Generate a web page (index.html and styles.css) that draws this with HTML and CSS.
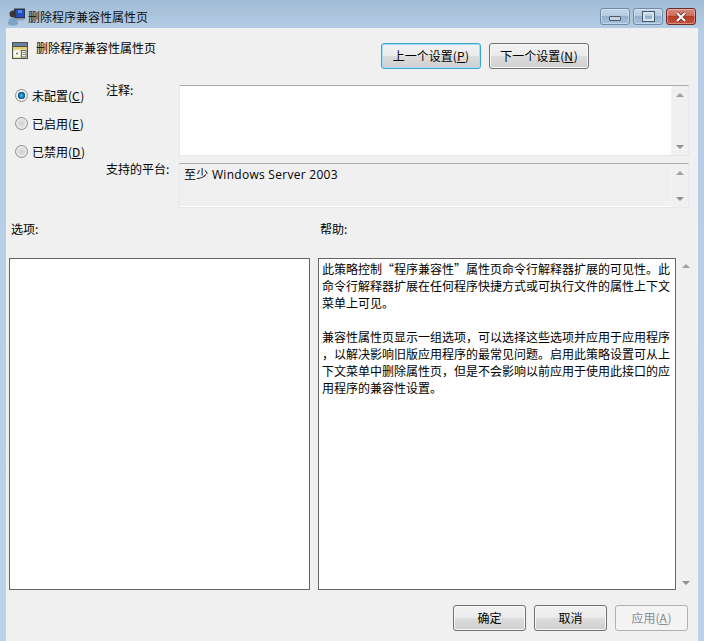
FILE: index.html
```html
<!DOCTYPE html>
<html lang="zh-CN">
<head>
<meta charset="utf-8">
<title>删除程序兼容性属性页</title>
<link rel="stylesheet" href="styles.css">
</head>
<body>
<div class="window">
  <header class="titlebar">
    <svg class="app-icon" width="17" height="18" viewBox="0 0 17 18">
      <rect x="6" y="0.500" width="11" height="10" fill="#2b3444"/>
      <rect x="8" y="2" width="8" height="7" fill="#1f4fc8"/>
      <rect x="10" y="2" width="4" height="3" fill="#4f86e6"/>
      <rect x="8" y="10.500" width="8" height="2" fill="#9aa3ad"/>
      <circle cx="5" cy="6" r="3.500" fill="#3b3633"/>
      <path d="M0 16c0-4 2-6.500 5-6.500s5 2.500 5 6.500c-2 2-8 2-10 0z" fill="#7fa3c6"/>
    </svg>
    <span class="window-title">删除程序兼容性属性页</span>
    <div class="controls">
      <span class="ctl"><i class="glyph-min"></i></span>
      <span class="ctl"><i class="glyph-max"></i></span>
      <span class="ctl close">
        <svg width="14" height="10" viewBox="0 0 14 10"><path d="M3 1 11 9M11 1 3 9" stroke="#5a2020" stroke-width="3.600" fill="none"/><path d="M3 1 11 9M11 1 3 9" stroke="#f4f4f4" stroke-width="2.400" fill="none"/></svg>
      </span>
    </div>
  </header>
  <main class="client">
    <div class="head">
      <svg class="policy-icon" width="16" height="17" viewBox="0 0 16 17">
        <rect x="0" y="0" width="16" height="17" fill="#465552"/>
        <rect x="1" y="1" width="14" height="3" fill="#6f7fa0"/>
        <rect x="1" y="5" width="14" height="2" fill="#e7c96a"/>
        <rect x="1" y="7" width="14" height="9" fill="#e4dca4"/>
        <circle cx="5" cy="11.500" r="3.500" fill="#f8f8f2"/>
        <circle cx="5" cy="11.500" r="1" fill="#67705f"/>
        <rect x="9.500" y="8.500" width="4.500" height="6.500" fill="#fff" stroke="#5d6b68"/>
        <path d="M10.500 10.500h2.500M10.500 12.500h2.500" stroke="#6d7c7a"/>
      </svg>
      <span class="policy-title">删除程序兼容性属性页</span>
      <div class="nav">
        <button class="btn focused" type="button">上一个设置(<u>P</u>)</button>
        <button class="btn" type="button">下一个设置(<u>N</u>)</button>
      </div>
    </div>
    <div class="config">
      <div class="radios">
        <label class="radio-row"><span class="radio on"></span><span>未配置(<u>C</u>)</span></label>
        <label class="radio-row"><span class="radio"></span><span>已启用(<u>E</u>)</span></label>
        <label class="radio-row"><span class="radio"></span><span>已禁用(<u>D</u>)</span></label>
      </div>
      <div class="field-label note-label">注释:</div>
      <div class="box note">
        <div class="box-body"></div>
        <div class="scroll"><i class="up"></i><i class="down"></i></div>
      </div>
      <div class="field-label platform-label">支持的平台:</div>
      <div class="box platform">
        <div class="box-body platform-text">至少 Windows Server 2003</div>
        <div class="scroll"><i class="up"></i><i class="down"></i></div>
      </div>
    </div>
    <div class="section-labels">
      <span class="options-label">选项:</span>
      <span>帮助:</span>
    </div>
    <div class="panes">
      <div class="pane options"></div>
      <div class="pane help">此策略控制“程序兼容性”属性页命令行解释器扩展的可见性。此<br>命令行解释器扩展在任何程序快捷方式或可执行文件的属性上下文<br>菜单上可见。<br><br>兼容性属性页显示一组选项，可以选择这些选项并应用于应用程序<br>，以解决影响旧版应用程序的最常见问题。启用此策略设置可从上<br>下文菜单中删除属性页，但是不会影响以前应用于使用此接口的应<br>用程序的兼容性设置。</div>
      <div class="scroll help-scroll"><i class="up"></i><i class="down"></i></div>
    </div>
    <footer class="footer">
      <button class="btn" type="button">确定</button>
      <button class="btn" type="button">取消</button>
      <button class="btn disabled" type="button">应用(<u>A</u>)</button>
    </footer>
  </main>
</div>
</body>
</html>
```
FILE: styles.css
```css
* { box-sizing: border-box; }
html, body { margin: 0; padding: 0; }
body {
  width: 704px;
  height: 641px;
  overflow: hidden;
  font-family: "Noto Sans CJK SC", "Open Sans", sans-serif;
  font-size: 12px;
  line-height: 17px;
  color: #000;
}
u { letter-spacing: 0.6px; }
.window {
  width: 704px;
  height: 641px;
  display: flex;
  flex-direction: column;
  background: linear-gradient(180deg, #a2bcd5 0, #b5cde5 30px, #bbd2e9 100%);
}
.titlebar {
  height: 28px;
  flex: none;
  display: flex;
  align-items: flex-start;
  padding-left: 8px;
}
.app-icon { margin-top: 8px; flex: none; }
.window-title { margin: 8px 0 0 3px; line-height: 17px; color: #0a1018; }
.controls { margin-left: auto; margin-right: 8px; margin-top: 8px; display: flex; gap: 3px; }
.ctl {
  width: 30px;
  height: 17px;
  border: 1px solid #6f8aa5;
  border-radius: 3px;
  background: linear-gradient(180deg, #c4d6e8 0, #b4cbe0 45%, #94b2d0 50%, #a6c2dc 100%);
  box-shadow: inset 0 0 0 1px rgba(255,255,255,.35);
  display: flex;
  align-items: center;
  justify-content: center;
}
.ctl.close {
  border-color: #6b2a2a;
  background: linear-gradient(180deg, #d68a7c 0, #cc6b5a 45%, #b83a26 50%, #c4553f 100%);
}
.glyph-min { display: block; width: 12px; height: 5px; margin-top: 3px; background: #c9d2dc; border: 1px solid #4a5a6c; border-radius: 1px; }
.glyph-max { display: block; width: 11px; height: 9px; background: transparent; border: 2px solid #d8e2ec; outline: 1px solid #46586c; outline-offset: 0; }
.client {
  flex: 1;
  margin: 0 6px;
  background: #f0f0f0;
  display: flex;
  flex-direction: column;
  min-height: 0;
}
.head {
  height: 57px;
  flex: none;
  display: flex;
  align-items: flex-start;
  padding: 14px 109px 0 6px;
}
.policy-icon { flex: none; }
.policy-title { margin-left: 8px; margin-top: -3px; line-height: 17px; }
.nav { margin-left: auto; margin-top: 1px; display: flex; gap: 8px; }
.btn {
  width: 73px;
  height: 26px;
  padding: 0 0 2px;
  border: 1px solid #707070;
  border-radius: 3px;
  background: linear-gradient(180deg, #f2f2f2 0, #ebebeb 50%, #dddddd 50%, #cfcfcf 100%);
  box-shadow: inset 0 0 0 1px #f8f8f8;
  font: inherit;
  color: #000;
}
.nav .btn { width: 100px; }
.btn.focused {
  border-color: #3aa6d8;
  box-shadow: inset 0 0 0 1px #a6e0f5;
}
.btn.disabled {
  border-color: #adb2b5;
  background: #f4f4f4;
  box-shadow: none;
  color: #8a8a8a;
}
.config {
  flex: none;
  display: grid;
  grid-template-columns: 100px 73px 510px;
  grid-template-rows: 71px 45px;
  row-gap: 7px;
}
.radios {
  grid-row: 1 / span 2;
  padding: 2px 0 0 9px;
  display: flex;
  flex-direction: column;
  gap: 11px;
}
.radio-row { display: flex; align-items: center; gap: 4px; height: 17px; }
.radio {
  width: 13px;
  height: 13px;
  flex: none;
  border-radius: 50%;
  border: 1px solid #8e8f8f;
  background: radial-gradient(circle at 50% 50%, #d0d0d0 0, #f4f4f4 100%);
  box-shadow: inset 0 0 0 1px #e8e8e8;
}
.radio.on { background: radial-gradient(circle at 50% 50%, #4fc2f0 0, #0f6fa0 2.500px, #1d5f85 3.500px, #f2f2f2 4px); }
.field-label { grid-column: 2; line-height: 17px; }
.note-label { grid-row: 1; margin-top: -4px; }
.platform-label { grid-row: 2; margin-top: -3px; }
.box {
  grid-column: 3;
  display: flex;
  border: 1px solid #e3e7ee;
  border-top-color: #ababab;
}
.note { background: #fff; grid-row: 1; }
.platform { background: #f0f0f0; grid-row: 2; box-shadow: inset -1px -1px 0 #fff; }
.box-body { flex: 1; }
.platform-text {
  padding: 2px 0 0 4px;
  font-family: "Open Sans", "Noto Sans CJK SC", sans-serif;
  font-size: 12px;
  letter-spacing: 0.28px;
}
.scroll {
  width: 17px;
  flex: none;
  background: #f0f0f0;
  display: flex;
  flex-direction: column;
  justify-content: space-between;
  align-items: center;
  padding: 7px 0 6px;
  border-left: 1px solid #f5f5f5;
}
.up, .down { display: block; width: 0; height: 0; border-left: 4px solid transparent; border-right: 4px solid transparent; }
.up { border-bottom: 4px solid #a0a0a0; }
.down { border-top: 4px solid #909090; }
.section-labels {
  flex: none;
  margin-top: 12px;
  height: 38px;
  display: flex;
  padding-left: 5px;
  line-height: 17px;
}
.options-label { width: 309px; }
.panes {
  flex: none;
  height: 332px;
  display: flex;
  margin-left: 3px;
}
.pane { background: #fff; border: 1px solid #646464; border-radius: 0; }
.options { width: 301px; margin-right: 8px; }
.help { width: 358px; padding: 1px 0 0 3px; line-height: 17px; color: #000; white-space: nowrap; }
.help-scroll { width: 18px; padding: 6px 0 5px; }
.footer {
  flex: none;
  margin-top: 15px;
  display: flex;
  justify-content: flex-end;
  gap: 8px;
  padding-right: 10px;
}
```
